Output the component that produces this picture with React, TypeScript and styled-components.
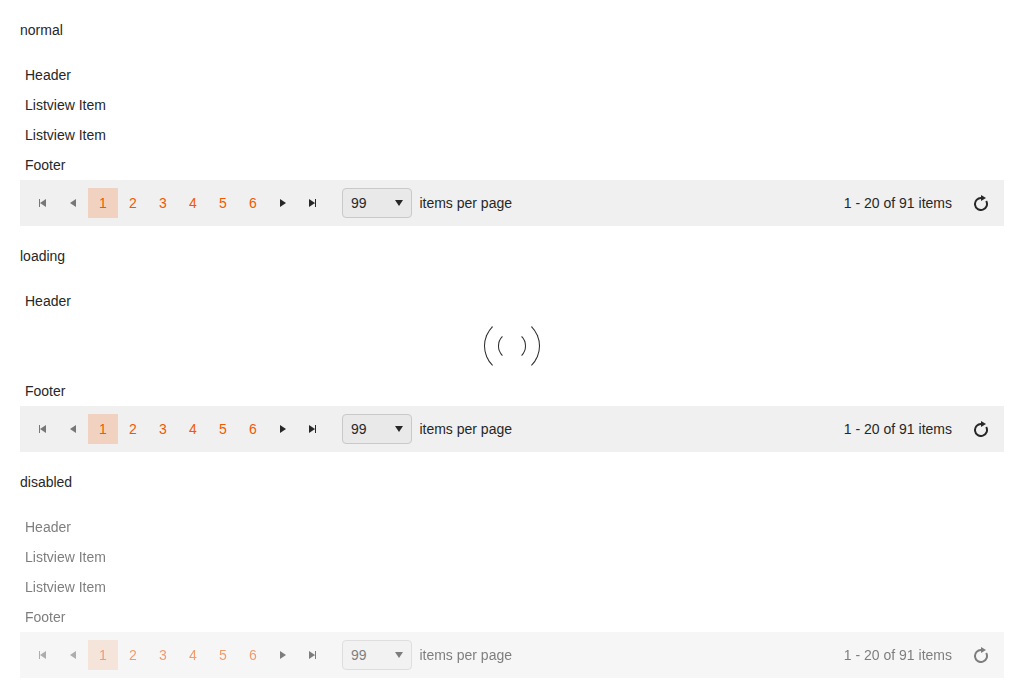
import React from "react";
import styled, { createGlobalStyle } from "styled-components";

const GlobalStyle = createGlobalStyle`
  *, *::before, *::after { box-sizing: border-box; }
  body {
    margin: 0;
    padding: 20px;
    background: #fff;
    color: #272727;
    font: 14px/20px "Liberation Sans", Arial, sans-serif;
  }
`;

const Page = styled.main`
  display: grid;
  gap: 20px;
`;

const ListView = styled.section<{ $disabled?: boolean }>`
  display: flex;
  flex-direction: column;
  opacity: ${(p) => (p.$disabled ? 0.6 : 1)};
  filter: ${(p) => (p.$disabled ? "grayscale(0.1)" : "none")};
`;

const Row = styled.div`
  padding: 5px;
`;

const LoadingArea = styled.div`
  height: 60px;
  display: flex;
  align-items: center;
  justify-content: center;
`;

const Arc = styled.div<{ $size: number }>`
  width: ${(p) => p.$size}px;
  height: ${(p) => p.$size}px;
  display: flex;
  align-items: center;
  justify-content: center;
  flex: none;
  border: 1px solid;
  border-color: transparent currentColor;
  border-radius: 50%;
`;

const PagerBar = styled.div`
  height: 46px;
  padding: 8px;
  display: flex;
  align-items: center;
  background: #f0f0f0;
`;

const PagerButton = styled.button<{ $selected?: boolean; $page?: boolean }>`
  width: 30px;
  height: 30px;
  padding: 0;
  border: 0;
  display: flex;
  align-items: center;
  justify-content: center;
  font: inherit;
  color: ${(p) => (p.$page ? "#f35800" : "#272727")};
  background: ${(p) => (p.$selected ? "#f1d2c0" : "transparent")};

  &:disabled svg {
    opacity: 0.6;
  }
`;

const Icon = styled.svg`
  width: 16px;
  height: 16px;
  display: block;
  fill: currentColor;
`;

const SizePicker = styled.div`
  width: 70px;
  height: 30px;
  margin: 0 7.4px 0 14px;
  padding: 0 4px 0 8px;
  display: flex;
  align-items: center;
  justify-content: space-between;
  border: 1px solid #c9c9c9;
  border-radius: 4px;
  background: #e9e9e9;
`;

const PagerInfo = styled.span`
  margin-left: auto;
  margin-right: 14px;
`;

const FirstIcon = () => (
  <Icon viewBox="0 0 16 16"><path d="M4 4h1v8H4zM11 4v8L5 8z" /></Icon>
);
const PrevIcon = () => (
  <Icon viewBox="0 0 16 16"><path d="M11 4v8L5 8z" /></Icon>
);
const NextIcon = () => (
  <Icon viewBox="0 0 16 16"><path d="M5 4v8l6-4z" /></Icon>
);
const LastIcon = () => (
  <Icon viewBox="0 0 16 16"><path d="M4 4v8l6-4zM10 4h1v8h-1z" /></Icon>
);
const CaretIcon = () => (
  <Icon viewBox="0 0 16 16"><path d="M4 5h8l-4 6z" /></Icon>
);
const RefreshIcon = () => (
  <Icon viewBox="0 0 16 16">
    <path d="M13.2 6A6 6 0 1 1 8.4 3" fill="none" stroke="currentColor" strokeWidth="2" />
    <path d="M8 0l5 3-5 3z" />
  </Icon>
);

function Pager() {
  return (
    <PagerBar>
      <PagerButton disabled aria-label="First page"><FirstIcon /></PagerButton>
      <PagerButton disabled aria-label="Previous page"><PrevIcon /></PagerButton>
      {[1, 2, 3, 4, 5, 6].map((n) => (
        <PagerButton key={n} $page $selected={n === 1}>{n}</PagerButton>
      ))}
      <PagerButton aria-label="Next page"><NextIcon /></PagerButton>
      <PagerButton aria-label="Last page"><LastIcon /></PagerButton>
      <SizePicker>99<CaretIcon /></SizePicker>
      <span>items per page</span>
      <PagerInfo>1 - 20 of 91 items</PagerInfo>
      <PagerButton aria-label="Refresh"><RefreshIcon /></PagerButton>
    </PagerBar>
  );
}

function Items() {
  return (
    <>
      <Row>Listview Item</Row>
      <Row>Listview Item</Row>
    </>
  );
}

function Loader() {
  return (
    <LoadingArea>
      <Arc $size={56}>
        <Arc $size={28} />
      </Arc>
    </LoadingArea>
  );
}

const states = ["normal", "loading", "disabled"];

export default function App() {
  return (
    <Page>
      <GlobalStyle />
      {states.map((state) => (
        <React.Fragment key={state}>
          <div>{state}</div>
          <ListView $disabled={state === "disabled"}>
            <Row>Header</Row>
            {state === "loading" ? <Loader /> : <Items />}
            <Row>Footer</Row>
            <Pager />
          </ListView>
        </React.Fragment>
      ))}
    </Page>
  );
}
